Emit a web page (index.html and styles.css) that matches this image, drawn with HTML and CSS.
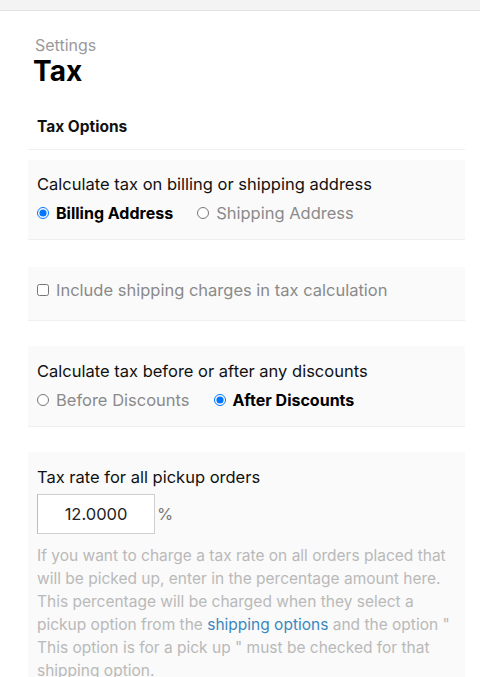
FILE: index.html
```html
<!DOCTYPE html>
<html>
<head>
<meta charset="utf-8">
<link rel="stylesheet" href="styles.css">
</head>
<body>
<div class="topbar"></div>
<main class="main">
  <header class="head">
    <div class="crumb">Settings</div>
    <h1 class="title">Tax</h1>
  </header>
  <div class="sect-title">Tax Options</div>

  <section class="box box1">
    <div class="label">Calculate tax on billing or shipping address</div>
    <div class="opts">
      <label class="opt on"><input type="radio" name="addr" checked> Billing Address</label>
      <label class="opt"><input type="radio" name="addr"> Shipping Address</label>
    </div>
  </section>

  <section class="box box2">
    <label class="check"><input type="checkbox"> Include shipping charges in tax calculation</label>
  </section>

  <section class="box box3">
    <div class="label">Calculate tax before or after any discounts</div>
    <div class="opts">
      <label class="opt"><input type="radio" name="disc"> Before Discounts</label>
      <label class="opt on"><input type="radio" name="disc" checked> After Discounts</label>
    </div>
  </section>

  <section class="box box4">
    <div class="label">Tax rate for all pickup orders</div>
    <div class="rate">
      <input class="num" type="text" value="12.0000">
      <span class="pct">%</span>
    </div>
    <p class="help">If you want to charge a tax rate on all orders placed that will be picked up, enter in the percentage amount here. This percentage will be charged when they select a pickup option from the <a href="#">shipping options</a> and the option " This option is for a pick up " must be checked for that shipping option.</p>
  </section>
</main>
</body>
</html>
```
FILE: styles.css
```css
* { box-sizing: border-box; }
html, body { margin: 0; padding: 0; background: #fff; }
body {
  font-family: Inter, "Noto Sans", sans-serif;
  font-size: 16.5px;
  color: #111;
  height: 677px;
  overflow: hidden;
}
.topbar {
  height: 11px;
  background: #f3f3f3;
  border-bottom: 1px solid #e2e2e2;
}
.main {
  padding: 0 15px 0 28px;
}
.head {
  padding: 24px 0 0 5px;
}
.crumb {
  font-size: 16px;
  line-height: 20px;
  color: #9a9a9a;
  padding-left: 2px;
}
.title {
  margin: 0;
  font-size: 28px;
  line-height: 32px;
  font-weight: 700;
  color: #000;
}
.sect-title {
  margin-top: 18px;
  padding: 12px 9px 12px 9px;
  font-size: 15.5px;
  line-height: 20px;
  font-weight: 700;
  color: #111;
  border-bottom: 1px solid #f0f0f0;
}
.box {
  background: #fafafa;
  border-bottom: 1px solid #efefef;
  padding: 12px 9px 14px 9px;
}
.box1 { margin-top: 10px; }
.box2 { margin-top: 27px; padding-top: 11px; padding-bottom: 18px; }
.box3 { margin-top: 25px; padding-top: 13px; padding-bottom: 14px; }
.box4 { margin-top: 25px; padding-top: 13px; border-bottom: none; }
.label {
  line-height: 24px;
  color: #111;
}
.opts {
  display: flex;
  gap: 24px;
  margin-top: 5px;
  line-height: 24px;
}
.opt {
  display: flex;
  align-items: center;
  color: #8a8a8a;
}
.opt.on {
  color: #000;
  font-weight: 700;
  font-size: 16px;
}
.opt input, .check input {
  margin: 0 7px 0 0;
  width: 12px;
  height: 12px;
}
.check {
  display: flex;
  align-items: center;
  line-height: 24px;
  color: #8a8a8a;
}
.rate {
  display: flex;
  align-items: center;
  margin-top: 5px;
}
.num {
  width: 118px;
  height: 40px;
  border: 1px solid #cfcfcf;
  border-left-color: #bdbdbd;
  border-radius: 0;
  background: #fff;
  font-family: Inter, "Noto Sans", sans-serif;
  font-size: 16.5px;
  color: #222;
  text-align: center;
  padding: 0;
  outline: none;
}
.pct {
  margin-left: 2px;
  color: #777;
}
.help {
  margin: 10px 0 0 0;
  font-size: 15.5px;
  line-height: 23px;
  color: #b9b9b9;
}
.help a {
  color: #3a87c0;
  text-decoration: none;
}
```
